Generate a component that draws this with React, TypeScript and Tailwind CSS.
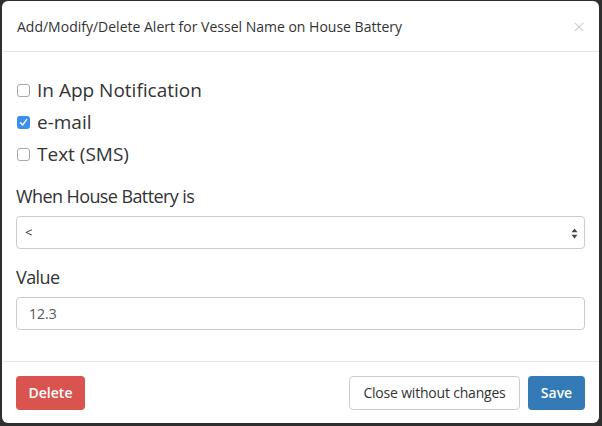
import { useState } from 'react';

const font = { fontFamily: '"Open Sans", "Noto Sans", sans-serif' };

function Check({ label, checked }: { label: string; checked?: boolean }) {
  return (
    <label className="h-[32px] flex items-center gap-[7px] text-[19px] text-[#333]">
      {checked ? (
        <span className="w-[13px] h-[13px] rounded-[3px] bg-[#3b8ff0] flex items-center justify-center">
          <svg width="9" height="9" viewBox="0 0 9 9">
            <path d="M1.5 4.8 L3.6 7 L7.6 1.6" stroke="white" strokeWidth="1.4" fill="none" strokeLinecap="round" strokeLinejoin="round" />
          </svg>
        </span>
      ) : (
        <span className="w-[13px] h-[13px] rounded-[3px] border border-[#a9a9a9] bg-white" />
      )}
      <span>{label}</span>
    </label>
  );
}

export default function App() {
  const [value, setValue] = useState('12.3');
  return (
    <div className="w-[602px] h-[426px] bg-[#2f2f2f] pt-[1px] pl-[2px] pr-[3px] pb-[3px]" style={font}>
      <div className="h-full bg-white rounded-[6px] flex flex-col">
        {/* header */}
        <div className="h-[51px] border-b border-[#e5e5e5] pl-[15px] pr-[14px] flex items-center justify-between">
          <h4 className="text-[14px] text-[#333]">Add/Modify/Delete Alert for Vessel Name on House Battery</h4>
          <span className="text-[21px] leading-none text-[#c8c8c8] font-light">×</span>
        </div>

        {/* body */}
        <div className="flex-1 px-[14px] pt-[22px]">
          <div className="pl-[1px]">
            <Check label="In App Notification" />
            <Check label="e-mail" checked />
            <Check label="Text (SMS)" />
          </div>

          <div className="mt-[14px] h-[24px] flex items-center text-[18px] tracking-[-0.6px] text-[#333]">When House Battery is</div>
          <div className="mt-[8px] relative h-[33px] border border-[#ccc] rounded-[4px] flex items-center px-[8px] text-[13px] text-[#333]">
            <span>&lt;</span>
            <svg className="absolute right-[6px] top-[11px]" width="7" height="11" viewBox="0 0 7 11">
              <path d="M3.5 0.5 L6.5 4.3 L0.5 4.3 Z" fill="#444" />
              <path d="M3.5 10.5 L6.5 6.7 L0.5 6.7 Z" fill="#444" />
            </svg>
          </div>

          <div className="mt-[16px] h-[24px] flex items-center text-[18px] tracking-[-0.6px] text-[#333]">Value</div>
          <input
            value={value}
            onChange={e => setValue(e.target.value)}
            className="mt-[8px] w-full h-[33px] border border-[#ccc] rounded-[4px] px-[12px] text-[14px] text-[#555] outline-none"
            style={font}
          />
        </div>

        {/* footer */}
        <div className="h-[62px] border-t border-[#e5e5e5] px-[14px] flex items-center justify-between">
          <button className="h-[34px] rounded-[4px] bg-[#d9534f] text-white text-[14px] font-semibold w-[69px]">Delete</button>
          <div className="flex items-center gap-[8px]">
            <button className="h-[34px] rounded-[4px] bg-white border border-[#ccc] text-[#333] text-[14px] tracking-[-0.2px] whitespace-nowrap w-[171px]">Close without changes</button>
            <button className="h-[34px] rounded-[4px] bg-[#337ab7] text-white text-[14px] font-semibold w-[57px]">Save</button>
          </div>
        </div>
      </div>
    </div>
  );
}
